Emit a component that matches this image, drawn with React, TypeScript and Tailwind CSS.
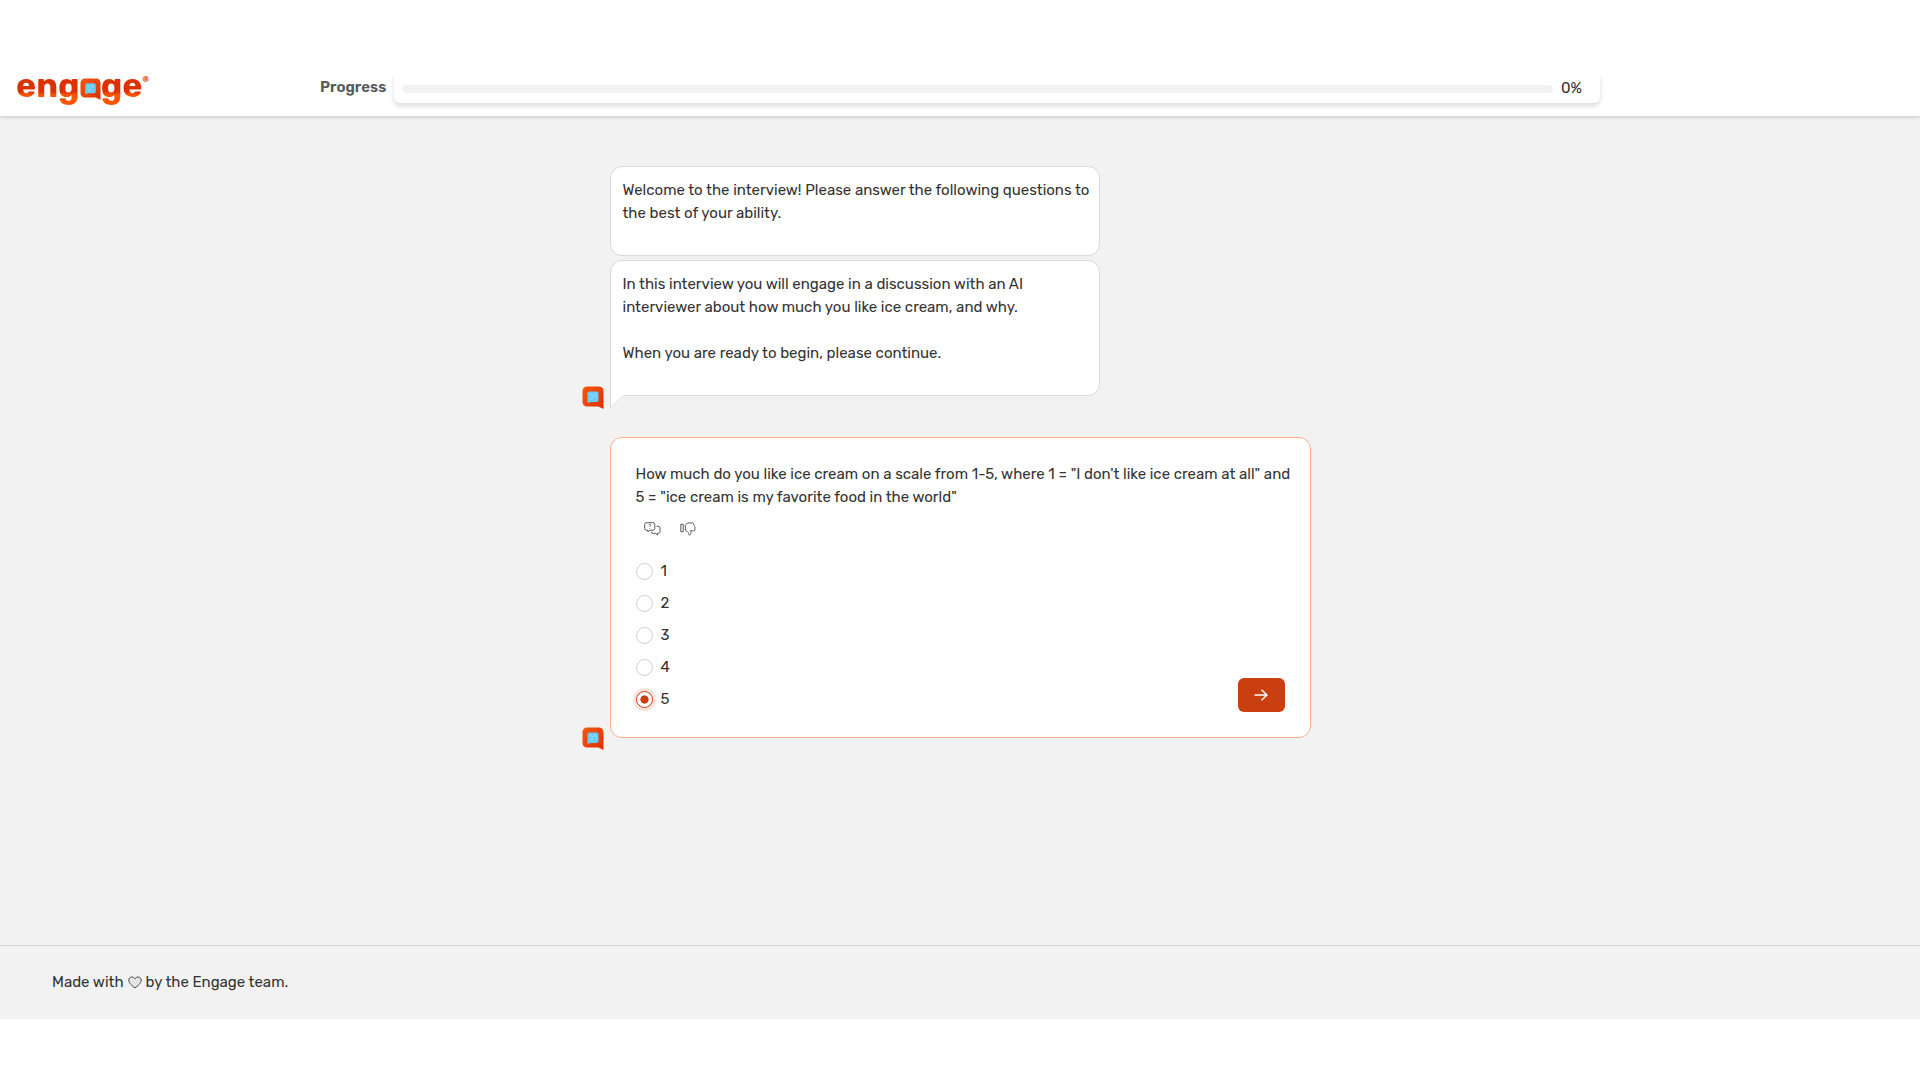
import { useState } from "react";

const OPTIONS = ["1", "2", "3", "4", "5"];

function BubbleMark({ className }: { className: string }) {
  return (
    <svg viewBox="0 0 22 23" className={className} aria-hidden="true">
      <defs>
        <linearGradient id="bubble" x1="0" y1="0" x2="1" y2="1">
          <stop offset="0" stopColor="#f4590f" />
          <stop offset="1" stopColor="#dc2f02" />
        </linearGradient>
      </defs>
      <path
        d="M5 0.5h12a4.500 4.500 0 0 1 4.500 4.500V23L16.500 20.500H5A4.500 4.500 0 0 1 0.500 16V5A4.500 4.500 0 0 1 5 0.500Z"
        fill="url(#bubble)"
      />
      <path
        d="M7.500 5.500h7a2 2 0 0 1 2 2v6.500a2 2 0 0 1-2 2H9L5.500 17V7.500a2 2 0 0 1 2-2Z"
        fill="#67cdf8"
      />
      <path
        d="M8 8l3 2M12.500 7.500l1.500 3M8.500 13l3-1.500"
        stroke="#a5e4fd"
        strokeWidth="1"
      />
    </svg>
  );
}

function Logo() {
  const letters =
    "bg-linear-to-b from-[#dc3202] from-60% to-[#ff5500] to-70% bg-clip-text pb-1 text-transparent";
  return (
    <div className="-mt-0.5 flex items-center text-[34px] leading-8 font-bold">
      <span className={letters}>eng</span>
      <BubbleMark className="mt-px h-[22px] w-[21px]" />
      <span className={letters}>ge</span>
      <span className="mt-1 self-start text-[8px] leading-3 text-[#dc3202]">®</span>
    </div>
  );
}

function QuestionIcon() {
  return (
    <svg viewBox="0 0 17 14" className="h-[14px] w-[17px]" fill="none" stroke="currentColor">
      <path d="M2.500 0.700h6.500a1.800 1.800 0 0 1 1.800 1.800v4a1.800 1.800 0 0 1-1.800 1.800H5.700L4 10V8.300H2.500A1.800 1.800 0 0 1 0.700 6.500v-4A1.800 1.800 0 0 1 2.500 0.700Z" />
      <path d="M12.500 4.300h1.700A1.800 1.800 0 0 1 16 6.100v3.400a1.800 1.800 0 0 1-1.800 1.800h-.7V13l-2-1.700H9A1.800 1.800 0 0 1 7.200 9.700" />
      <path d="M4.700 3.200c.1-1.300 2.200-1.200 2.100 0 0 .8-1 .7-1 1.700M5.800 6v.8" strokeWidth="0.8" />
    </svg>
  );
}

function ThumbsDownIcon() {
  return (
    <svg viewBox="0 0 16 14" className="h-[14px] w-4" fill="none" stroke="currentColor" strokeLinejoin="round">
      <path d="M0.800 2.300h2.400v7.400H0.800Z" />
      <path d="M5.300 8.300V3.200C6.500 1.900 7.300 0.900 9 0.900h3.200c1 0 1.500.7 1.400 1.400.8.300 1 1.200.7 1.900.8.500.9 1.300.5 2 .7 1.200.1 2.600-1.200 2.600h-3c.7 1.900.4 4.100-1.100 4.300-1 0-.7-1.500-1.300-2.600C7.500 9.300 6.600 9.200 5.300 8.300Z" />
    </svg>
  );
}

export default function App() {
  const [answer, setAnswer] = useState("5");

  return (
    <div className="flex min-h-screen flex-col bg-white pb-[61px] font-[Rubik,Roboto,sans-serif] text-[15px] leading-[23px] text-[#333]">
      {/* Header */}
      <header className="relative grid grid-cols-[1fr_minmax(0,1280px)_1fr] items-start bg-white pt-[72px] pb-[10px] shadow-[0_1px_4px_rgba(0,0,0,0.2)]">
        <div className="pl-4">
          <Logo />
        </div>
        <div className="flex items-center gap-2">
          <span id="progress-label" className="font-semibold text-[#595959]">
            Progress
          </span>
          <div className="flex flex-1 items-center gap-2 rounded-md pt-[5px] pr-[18px] pb-[3px] pl-2 shadow-[0_3px_5px_rgba(0,0,0,0.15)]">
            <div
              role="progressbar"
              aria-labelledby="progress-label"
              aria-valuenow={0}
              className="h-2 flex-1 rounded-full bg-[#f2f2f2]"
            />
            <span>0%</span>
          </div>
        </div>
      </header>

      {/* Conversation */}
      <main className="flex-1 bg-[#f2f2f2] pt-[50px]">
        <div className="grid grid-cols-[1fr_minmax(0,701px)_1fr] gap-x-[6px]">
          <BubbleMark className="mt-auto -mb-[13px] h-[23px] w-[22px] justify-self-end" />
          <div className="flex max-w-[490px] flex-col gap-1">
            <div className="rounded-xl border border-[#d9d9d9] bg-white pt-3 pr-2 pb-[30px] pl-3">
              <p>
                Welcome to the interview! Please answer the following questions
                to the best of your ability.
              </p>
            </div>
            <div className="relative rounded-xl rounded-bl-none border border-[#d9d9d9] bg-white pt-3 pr-12 pb-[30px] pl-3">
              <p>
                In this interview you will engage in a discussion with an AI
                interviewer about how much you like ice cream, and why.
              </p>
              <p className="mt-[23px]">
                When you are ready to begin, please continue.
              </p>
              <svg
                viewBox="0 0 14 14"
                className="absolute top-full -left-px h-[14px] w-[14px]"
                aria-hidden="true"
              >
                <path d="M0 0H14L0.500 13Z" fill="#fff" />
                <path d="M0.500 0V13L13.500 0.500" fill="none" stroke="#d9d9d9" />
              </svg>
            </div>
          </div>
        </div>

        <div className="mt-[41px] grid grid-cols-[1fr_minmax(0,701px)_1fr] gap-x-[6px]">
          <BubbleMark className="mt-auto -mb-3 h-[23px] w-[22px] justify-self-end" />
          <form
            onSubmit={(e) => e.preventDefault()}
            className="rounded-xl border border-[#fbb184] bg-white p-[25px]"
          >
            <p id="question" className="-mr-3">
              How much do you like ice cream on a scale from 1-5, where 1 = "I
              don't like ice cream at all" and 5 = "ice cream is my favorite
              food in the world"
            </p>
            <div className="mt-[13px] flex gap-[19px] px-2 text-[#595959]">
              <button type="button" aria-label="Ask for clarification">
                <QuestionIcon />
              </button>
              <button type="button" aria-label="Dislike this question">
                <ThumbsDownIcon />
              </button>
            </div>
            <div className="mt-6 flex items-end justify-between">
              <div role="radiogroup" aria-labelledby="question" className="flex flex-col gap-[9px] pb-px">
                {OPTIONS.map((option) => (
                  <label key={option} className="flex items-center gap-2">
                    <input
                      type="radio"
                      name="rating"
                      value={option}
                      checked={answer === option}
                      onChange={() => setAnswer(option)}
                      className="size-[17px] appearance-none rounded-full border border-[#d0d0d0] bg-white checked:border-[#c93f10] checked:bg-radial checked:from-[#c93f10] checked:from-36% checked:to-white checked:to-42% checked:shadow-[0_0_0_3px_#fae3db]"
                    />
                    {option}
                  </label>
                ))}
              </div>
              <button
                type="submit"
                aria-label="Next"
                className="flex h-[34px] w-[47px] items-center justify-center rounded-md bg-[#c93f10] text-white"
              >
                <svg viewBox="0 0 14 12" className="h-3 w-[14px]" fill="none" stroke="currentColor" strokeWidth="1.400">
                  <path d="M0.500 6H13M7.500 0.700L13 6L7.500 11.300" />
                </svg>
              </button>
            </div>
          </form>
        </div>
      </main>

      {/* Footer */}
      <footer className="border-t border-[#d2d2d2] bg-[#f2f2f2] px-[52px] py-[25px]">
        <p className="flex items-center gap-1">
          Made with
          <svg viewBox="0 0 14 13" className="h-[13px] w-[14px]" fill="#e4e4e4" stroke="#444" role="img" aria-label="love">
            <path d="M7 12C4 9.500 0.800 7.300 0.800 4.200 0.800 2.300 2.100 1 3.800 1 5.200 1 6.300 1.700 7 2.800 7.700 1.700 8.800 1 10.200 1 11.900 1 13.200 2.300 13.200 4.200 13.200 7.300 10 9.500 7 12Z" />
          </svg>
          by the Engage team.
        </p>
      </footer>
    </div>
  );
}
